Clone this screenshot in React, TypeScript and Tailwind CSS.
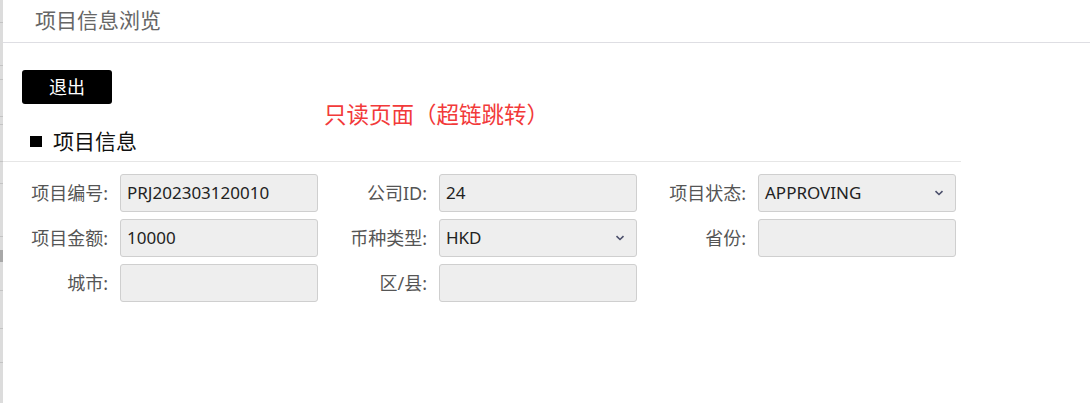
import React from 'react';

const font = { fontFamily: '"Noto Sans", "Noto Sans CJK SC", sans-serif' };

type Field = { label: string; value: string; select?: boolean };

const rows: Field[][] = [
  [
    { label: '项目编号:', value: 'PRJ202303120010' },
    { label: '公司ID:', value: '24' },
    { label: '项目状态:', value: 'APPROVING', select: true },
  ],
  [
    { label: '项目金额:', value: '10000' },
    { label: '币种类型:', value: 'HKD', select: true },
    { label: '省份:', value: '' },
  ],
  [
    { label: '城市:', value: '' },
    { label: '区/县:', value: '' },
  ],
];

function Chevron() {
  return (
    <svg width="10" height="6" viewBox="0 0 10 6" className="shrink-0">
      <path d="M1.5 1.2 L5 4.5 L8.5 1.2" fill="none" stroke="#4b4f6b" strokeWidth="1.6" />
    </svg>
  );
}

function FormField({ field }: { field: Field }) {
  return (
    <div className="flex items-center w-[319px]">
      <div className="w-[100px] text-right text-[18px] text-[#555] pr-[2px] whitespace-nowrap">{field.label}</div>
      <div className="ml-[10px] w-[198px] h-[38px] bg-[#eeeeee] border border-[#cfcfcf] rounded-[3px] flex items-center justify-between pl-[6px] pr-[11px] text-[17px] text-[#222]">
        <span>{field.value}</span>
        {field.select && <Chevron />}
      </div>
    </div>
  );
}

export default function App() {
  const stripLines = [22, 65, 79, 116, 124, 161, 183, 236, 290, 328, 362];
  return (
    <div className="flex w-[1090px] h-[403px] bg-white overflow-hidden" style={font}>
      <div className="w-[3px] h-full bg-[#dcdcdc] relative shrink-0">
        {stripLines.map((y) => (
          <div key={y} className="absolute left-0 w-[3px] h-px bg-[#c4c4c4]" style={{ top: y }} />
        ))}
        <div className="absolute left-0 top-[250px] w-[3px] h-[12px] bg-[#a8a8a8]" />
      </div>
      <div className="flex-1 flex flex-col bg-white rounded-tl-[6px]">
        <div className="h-[43px] border-b border-[#dedee3] flex items-center pl-[32px] text-[21px] text-[#666] pb-[1px]">
          项目信息浏览
        </div>
        <div className="pt-[27px] pl-[19px]">
          <button className="w-[90px] h-[34px] bg-black text-white text-[18px] rounded-[3px] flex items-center justify-center">
            退出
          </button>
        </div>
        <div className="pl-[321px] mt-[-3px] text-[22.5px] text-[#f23a3a] leading-[28px] whitespace-nowrap">只读页面（超链跳转）</div>
        <div className="w-[958px] border-b border-[#e6e6e6] h-[33px] flex items-center pl-[27px] pb-[7px]">
          <span className="w-[12px] h-[11px] bg-black" />
          <span className="ml-[11px] text-[21px] text-[#111]">项目信息</span>
        </div>
        <div className="flex flex-col gap-[7px] pt-[12px] pl-[7px]">
          {rows.map((r, i) => (
            <div key={i} className="flex">
              {r.map((f) => (
                <FormField key={f.label} field={f} />
              ))}
            </div>
          ))}
        </div>
      </div>
    </div>
  );
}
